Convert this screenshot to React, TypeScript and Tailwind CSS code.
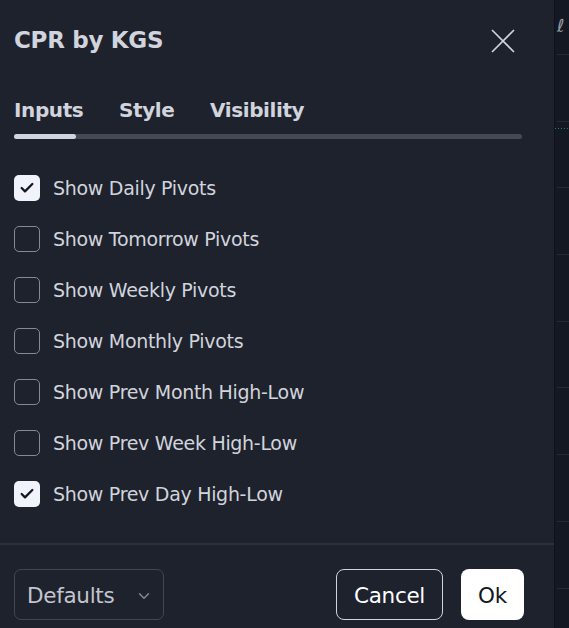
import { Check, ChevronDown } from "lucide-react";

const options = [
  { label: "Show Daily Pivots", checked: true },
  { label: "Show Tomorrow Pivots", checked: false },
  { label: "Show Weekly Pivots", checked: false },
  { label: "Show Monthly Pivots", checked: false },
  { label: "Show Prev Month High-Low", checked: false },
  { label: "Show Prev Week High-Low", checked: false },
  { label: "Show Prev Day High-Low", checked: true }
];

const gridLines = [54, 121, 187, 254, 321, 387, 454, 521, 588];

function ChartStrip() {
  return (
    <svg width="14" height="628" className="block">
      <rect width="14" height="628" fill="#141823" />
      {gridLines.map((y) => (
        <line key={y} x1="2" x2="14" y1={y + 0.5} y2={y + 0.5} stroke="#262a35" />
      ))}
      <line x1="0" x2="14" y1="128.5" y2="128.5" stroke="#1f7a72" strokeDasharray="1 2" />
      <text x="2" y="32" fill="#9598a1" fontSize="18" fontStyle="italic" fontFamily="DejaVu Sans, sans-serif">
        ℓ
      </text>
    </svg>
  );
}

export default function App() {
  return (
    <div className="flex h-[628px] w-[569px] overflow-hidden bg-[#141823] font-['DejaVu_Sans',sans-serif] text-[#d1d4dc]">
      <div className="flex w-[554px] flex-col bg-[#1e222d]">
        <div className="flex h-[80px] items-center justify-between pl-[14px] pr-[38px] pt-[1px]">
          <h1 className="text-[23px] font-bold tracking-[-0.3px]">CPR by KGS</h1>
          <svg width="26" height="26" viewBox="0 0 26 26" fill="none" stroke="#d1d4dc" strokeWidth="1.6">
            <path d="M2 2l22 22M24 2L2 24" />
          </svg>
        </div>

        <div className="mt-[15px] px-[14px]">
          <div className="flex text-[20px] font-bold tracking-[-0.4px]">
            <span className="w-[105px]">Inputs</span>
            <span className="w-[91px]">Style</span>
            <span>Visibility</span>
          </div>
          <div className="mt-[9px] h-[5px] w-[508px] rounded-full bg-[#454955]">
            <div className="h-full w-[62px] rounded-full bg-[#d1d4dc]" />
          </div>
        </div>

        <div className="mt-[36px] flex flex-col gap-[25px] px-[14px]">
          {options.map((o) => (
            <label key={o.label} className="flex h-[26px] items-center gap-[13px] text-[19px] tracking-[-0.3px]">
              {o.checked ? (
                <span className="flex h-[26px] w-[26px] items-center justify-center rounded-[5px] bg-[#f0f3fa]">
                  <Check size={16} strokeWidth={3.4} color="#131722" />
                </span>
              ) : (
                <span className="h-[26px] w-[26px] rounded-[5px] border-[1.5px] border-[#868993]" />
              )}
              <span>{o.label}</span>
            </label>
          ))}
        </div>

        <div className="mt-auto h-[2px] bg-[#2c303b]" />
        <div className="flex h-[83px] items-start justify-between pl-[14px] pr-[30px] pt-[24px]">
          <button
            type="button"
            className="flex h-[51px] w-[150px] items-center justify-between rounded-[7px] border border-[#434651] pl-[12px] pr-[10px] pt-[3px] text-[21.5px] tracking-[-0.3px] text-[#c3c6ce]"
          >
            Defaults
            <ChevronDown size={18} color="#868993" />
          </button>
          <div className="flex gap-[18px]">
            <button
              type="button"
              className="h-[51px] w-[107px] rounded-[8px] border border-[#d1d4dc] pt-[3px] text-[21.5px] tracking-[-0.3px] text-white"
            >
              Cancel
            </button>
            <button
              type="button"
              className="h-[51px] w-[63px] rounded-[8px] bg-white pt-[3px] text-[21.5px] tracking-[-0.3px] text-[#131722]"
            >
              Ok
            </button>
          </div>
        </div>
      </div>
      <div className="w-px bg-[#0f121a]" />
      <ChartStrip />
    </div>
  );
}
